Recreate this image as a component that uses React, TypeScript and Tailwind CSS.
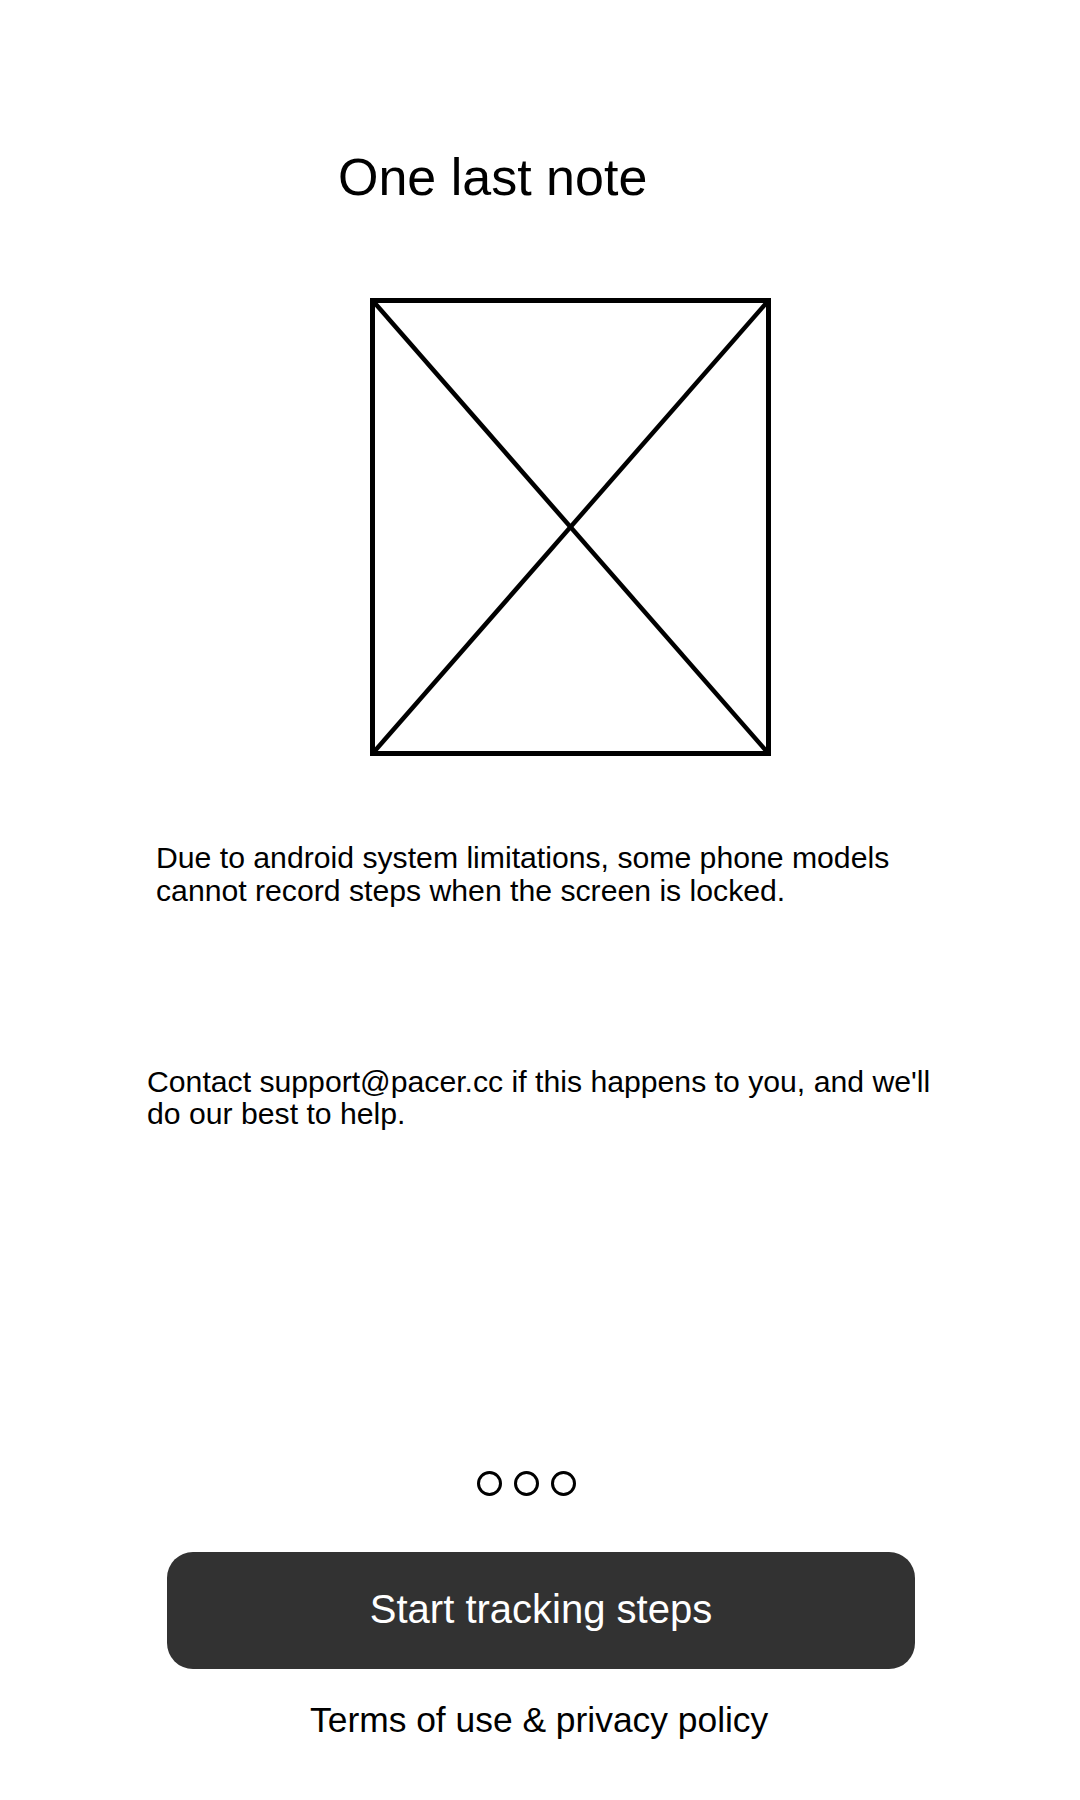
import React from 'react';

const PlaceholderImage: React.FC = () => (
  <svg width="401" height="458" viewBox="0 0 401 458" className="block ml-[370px] mt-[91px]">
    <rect x="2.5" y="2.5" width="396" height="453" fill="none" stroke="#000" strokeWidth="5" />
    <line x1="3" y1="3" x2="398" y2="455" stroke="#000" strokeWidth="4.5" />
    <line x1="398" y1="3" x2="3" y2="455" stroke="#000" strokeWidth="4.5" />
  </svg>
);

const App: React.FC = () => {
  return (
    <div className="w-[1080px] min-h-[1800px] bg-white text-black flex flex-col font-['Liberation_Sans',Arial,sans-serif]">
      {/* Title */}
      <h1 className="ml-[338px] mt-[148px] text-[52px] leading-[59px] font-normal">One last note</h1>

      {/* Illustration */}
      <PlaceholderImage />

      {/* Notes */}
      <p className="ml-[156px] mt-[85px] w-[770px] text-[30.2px] leading-[33px]">
        Due to android system limitations, some phone models cannot record steps when the screen is locked.
      </p>
      <p className="ml-[147px] mt-[159px] w-[805px] text-[30.2px] leading-[32px]">
        Contact support@pacer.cc if this happens to you, and we'll do our best to help.
      </p>

      {/* Pager dots */}
      <div className="ml-[477px] mt-[341px] flex items-center gap-[12px]">
        <span className="w-[25px] h-[25px] rounded-full border-[3px] border-black" />
        <span className="w-[25px] h-[25px] rounded-full border-[3px] border-black" />
        <span className="w-[25px] h-[25px] rounded-full border-[3px] border-black" />
      </div>

      {/* Action */}
      <button
        type="button"
        className="ml-[167px] mt-[56px] w-[748px] h-[117px] rounded-[26px] bg-[#323232] text-white text-[40px] leading-[45px] flex items-center justify-center pb-[2px]"
      >
        Start tracking steps
      </button>

      <a className="ml-[310px] mt-[31px] text-[35.4px] leading-[40px] text-black">Terms of use &amp; privacy policy</a>
    </div>
  );
};

export default App;
